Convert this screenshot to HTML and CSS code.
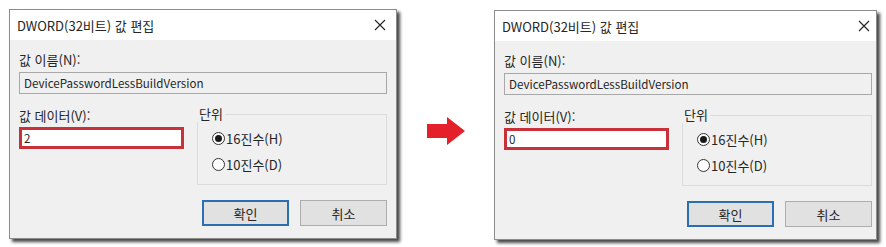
FILE: index.html
```html
<!DOCTYPE html>
<html lang="ko">

<head>
    <meta charset="UTF-8" />
    <meta name="viewport" content="width=device-width, initial-scale=1.0" />
    <title>DWORD 값 편집</title>
    <link rel="stylesheet" href="styles.css">
</head>

<body>

    <div class="scene">

        <!-- before -->
        <div class="dialog">
            <div class="titlebar">
                <span class="title">DWORD(32비트) 값 편집</span>
                <svg class="close" width="12" height="12" viewBox="0 0 12 12">
                    <path d="M1 1 L11 11 M11 1 L1 11" stroke="#222" stroke-width="1.1" fill="none" />
                </svg>
            </div>
            <div class="content">
                <div class="label">값 이름(N):</div>
                <div class="field readonly">DevicePasswordLessBuildVersion</div>
                <div class="row">
                    <div class="data">
                        <div class="label">값 데이터(V):</div>
                        <div class="field value">2</div>
                    </div>
                    <fieldset class="unit">
                        <legend>단위</legend>
                        <div class="radio checked"><span class="dot"></span>16진수(H)</div>
                        <div class="radio"><span class="dot"></span>10진수(D)</div>
                    </fieldset>
                </div>
                <div class="buttons">
                    <div class="btn default">확인</div>
                    <div class="btn">취소</div>
                </div>
            </div>
        </div>

        <svg class="arrow" width="38" height="28" viewBox="0 0 38 28">
            <path d="M0 7 H20 V0 L38 14 L20 28 V21 H0 Z" fill="#e4202a" />
        </svg>

        <!-- after -->
        <div class="dialog after">
            <div class="titlebar">
                <span class="title">DWORD(32비트) 값 편집</span>
                <svg class="close" width="12" height="12" viewBox="0 0 12 12">
                    <path d="M1 1 L11 11 M11 1 L1 11" stroke="#222" stroke-width="1.1" fill="none" />
                </svg>
            </div>
            <div class="content">
                <div class="label">값 이름(N):</div>
                <div class="field readonly">DevicePasswordLessBuildVersion</div>
                <div class="row">
                    <div class="data">
                        <div class="label">값 데이터(V):</div>
                        <div class="field value">0</div>
                    </div>
                    <fieldset class="unit">
                        <legend>단위</legend>
                        <div class="radio checked"><span class="dot"></span>16진수(H)</div>
                        <div class="radio"><span class="dot"></span>10진수(D)</div>
                    </fieldset>
                </div>
                <div class="buttons">
                    <div class="btn default">확인</div>
                    <div class="btn">취소</div>
                </div>
            </div>
        </div>

    </div>

</body>

</html>
```

FILE: styles.css
```css
body {
    margin: 0;
    padding: 0;
    background-color: #ffffff;
    font-family: "Noto Sans CJK KR", "Noto Sans", sans-serif;
    font-size: 13px;
    color: #262626;
    overflow: hidden;
}

.scene {
    display: flex;
    align-items: flex-start;
    padding: 9px 0 0 9px;
    width: 886px;
    height: 247px;
    box-sizing: border-box;
}

/* Dialog window */
.dialog {
    width: 388px;
    border: 1px solid #8c8c8c;
    background-color: #f0f0f0;
    box-shadow: 3px 3px 3px rgba(40, 40, 40, 0.85);
    box-sizing: border-box;
}

.dialog.after {
    width: 383px;
    margin-top: 1px;
}

.titlebar {
    height: 30px;
    background-color: #ffffff;
    display: flex;
    align-items: center;
    justify-content: space-between;
    padding: 0 10px 0 7px;
}

.dialog.after .titlebar {
    padding-right: 6px;
}

.content {
    padding: 12px 9px 12px 9px;
}

.dialog.after .content {
    padding-right: 4px;
}

.label {
    height: 16px;
    line-height: 16px;
}

.field {
    box-sizing: border-box;
    height: 22px;
    line-height: 20px;
    padding: 0 4px;
    font-size: 11.6px;
    background-color: #ffffff;
    border: 1px solid #a8a8a8;
}

.field.readonly {
    margin-top: 4px;
    background-color: #f0f0f0;
}

.row {
    display: flex;
    gap: 13px;
    margin-top: 12px;
}

.data {
    width: 165px;
    padding-top: 2px;
}

.field.value {
    margin-top: 3px;
    border: 3px solid #c8303a;
    line-height: 16px;
    padding: 0 2px;
}

/* Group box */
.unit {
    flex: 1;
    margin: 0;
    padding: 3px 0 7px 14px;
    border: 1px solid #dcdcdc;
    min-width: 0;
}

.unit legend {
    padding: 0 2px;
    margin-left: -15px;
    line-height: 16px;
}

.radio {
    display: flex;
    align-items: center;
    gap: 1px;
    height: 26px;
}

.dot {
    width: 11px;
    height: 11px;
    border: 1px solid #333;
    border-radius: 50%;
    background-color: #ffffff;
    display: flex;
    align-items: center;
    justify-content: center;
}

.radio.checked .dot::after {
    content: "";
    width: 7px;
    height: 7px;
    border-radius: 50%;
    background-color: #1a1a1a;
}

/* Buttons */
.buttons {
    display: flex;
    justify-content: flex-end;
    gap: 11px;
    margin-top: 15px;
}

.btn {
    width: 87px;
    height: 26px;
    box-sizing: border-box;
    border: 1px solid #adadad;
    background-color: #e1e1e1;
    display: flex;
    align-items: center;
    justify-content: center;
}

.btn.default {
    border: 2px solid #2b6fb3;
}

.arrow {
    margin: 108px 29px 0 30px;
}
```
